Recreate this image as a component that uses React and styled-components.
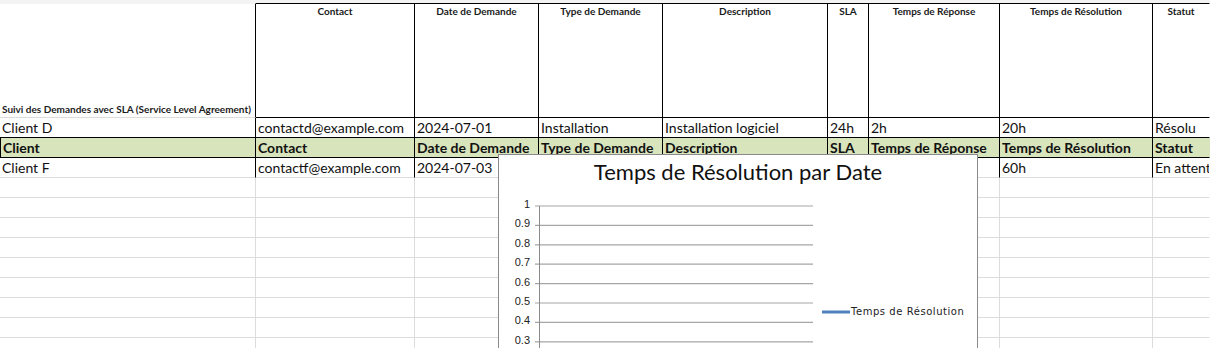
import React from 'react';
import styled, { createGlobalStyle } from 'styled-components';

const GlobalStyle = createGlobalStyle`
  html, body {
    margin: 0;
    padding: 0;
    background: #fff;
  }
  body {
    font-family: Lato, "Open Sans", sans-serif;
    overflow: hidden;
  }
`;

const LINE = '#000';
const GRID = '#dcdcdc';

const Page = styled.div`
  position: relative;
  width: 1210px;
  height: 348px;
  overflow: hidden;
`;

const TopBand = styled.div`
  height: 3px;
  background: #f3f3f4;
`;

const Sheet = styled.div`
  display: grid;
  grid-template-columns: 256px 159px 124px 124px 165px 41px 131px 153px 1fr;
  grid-template-rows: 115px;
  grid-auto-rows: 20px;
`;

const Cell = styled.div`
  box-sizing: border-box;
  display: flex;
  align-items: ${(p) => p.$valign || 'center'};
  justify-content: ${(p) => p.$align || 'flex-start'};
  padding: 0 2px;
  border-right: 1px solid ${(p) => p.$right || GRID};
  border-bottom: 1px solid ${(p) => p.$bottom || GRID};
  border-top: ${(p) => (p.$top ? `1px solid ${p.$top}` : 'none')};
  border-left: ${(p) => (p.$left ? `1px solid ${p.$left}` : 'none')};
  background: ${(p) => p.$bg || 'transparent'};
  font-size: 14px;
  font-weight: ${(p) => (p.$bold ? 700 : 400)};
  color: #111;
  white-space: nowrap;
  overflow: hidden;
`;

const HeadCell = styled(Cell)`
  font-size: 10px;
  font-weight: 700;
  color: #1a1a1a;
  padding-top: 1px;
  padding-bottom: 2px;
`;

const ChartPanel = styled.div`
  position: absolute;
  left: 498px;
  top: 154px;
  width: 480px;
  height: 230px;
  box-sizing: border-box;
  background: #fff;
  border: 1px solid #8a8a8a;
  display: flex;
  flex-direction: column;
`;

const ChartTitle = styled.div`
  height: 33px;
  display: flex;
  align-items: center;
  justify-content: center;
  font-family: Lato, sans-serif;
  font-size: 22px;
  color: #111;
`;

const headers = [
  'Contact',
  'Date de Demande',
  'Type de Demande',
  'Description',
  'SLA',
  'Temps de Réponse',
  'Temps de Résolution',
  'Statut',
];

const rowD = ['Client D', 'contactd@example.com', '2024-07-01', 'Installation', 'Installation logiciel', '24h', '2h', '20h', 'Résolu'];
const titles = ['Client', ...headers];
// the middle cells of this row sit under the chart
const rowF = ['Client F', 'contactf@example.com', '2024-07-03', '', '', '', '', '60h', 'En attente'];

const ticks = [1, 0.9, 0.8, 0.7, 0.6, 0.5, 0.4, 0.3, 0.2];

function ResolutionChart() {
  const top = 18;
  const step = 19.4;
  return (
    <ChartPanel>
      <ChartTitle>Temps de Résolution par Date</ChartTitle>
      <svg width="478" height="196">
        {ticks.map((t, i) => {
          const y = top + i * step;
          return (
            <g key={t}>
              <line x1="36" x2="314" y1={y} y2={y} stroke="#a6a6a6" strokeWidth="1.2" />
              <text
                x="31"
                y={y - 1}
                textAnchor="end"
                dominantBaseline="middle"
                fontFamily="Liberation Sans, Arial, sans-serif"
                fontSize="11"
                fill="#222"
              >
                {t}
              </text>
            </g>
          );
        })}
        <line x1="40.5" x2="40.5" y1={top} y2="196" stroke="#8a8a8a" strokeWidth="1" />
        <line x1="323" x2="351" y1="124" y2="124" stroke="#4f81bd" strokeWidth="3" />
        <text
          x="352"
          y="124"
          dominantBaseline="middle"
          fontFamily="DejaVu Sans, sans-serif"
          fontSize="10"
          letterSpacing="0.55"
          fill="#222"
        >
          Temps de Résolution
        </text>
      </svg>
    </ChartPanel>
  );
}

export default function App() {
  const empty = Array.from({ length: 9 });
  return (
    <Page>
      <GlobalStyle />
      <TopBand />
      <Sheet>
        <HeadCell $valign="flex-end" $right={LINE} $top="#f3f3f4" $bottom={GRID}>
          Suivi des Demandes avec SLA (Service Level Agreement)
        </HeadCell>
        {headers.map((h, i) => (
          <HeadCell
            key={h}
            $valign="flex-start"
            $align="center"
            $right={i === headers.length - 1 ? 'transparent' : LINE}
            $top={LINE}
            $bottom={LINE}
          >
            {h}
          </HeadCell>
        ))}

        {rowD.map((v, i) => (
          <Cell key={'d' + i} $right={i === rowD.length - 1 ? 'transparent' : LINE} $bottom={LINE}>
            {v}
          </Cell>
        ))}

        {titles.map((v, i) => (
          <Cell
            key={'t' + i}
            $bold
            $bg="#d8e4bc"
            $left={i === 0 ? LINE : null}
            $right={i === titles.length - 1 ? 'transparent' : LINE}
            $bottom={LINE}
          >
            {v}
          </Cell>
        ))}

        {rowF.map((v, i) => (
          <Cell key={'f' + i} $right={i === rowF.length - 1 ? 'transparent' : LINE}>
            {v}
          </Cell>
        ))}

        {empty.map((_, r) =>
          titles.map((_, i) => <Cell key={`e${r}-${i}`} $right={i === titles.length - 1 ? 'transparent' : GRID} />)
        )}
      </Sheet>
      <ResolutionChart />
    </Page>
  );
}
